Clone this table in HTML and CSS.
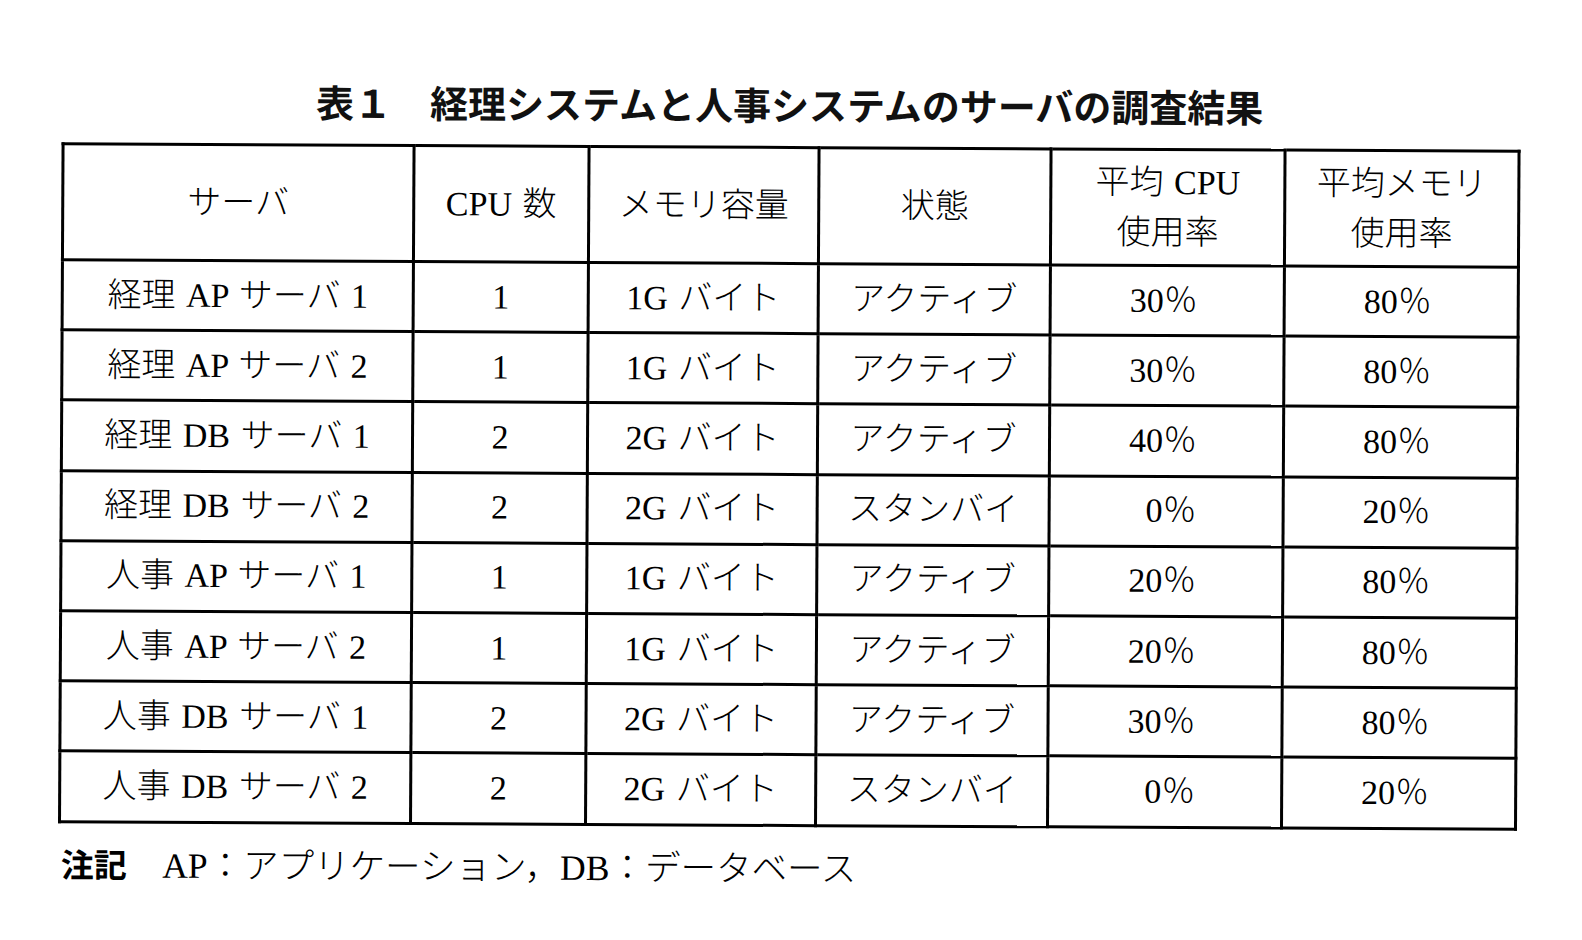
FILE: index.html
```html
<!DOCTYPE html>
<html lang="ja">
<head>
<meta charset="utf-8">
<title>表１　経理システムと人事システムのサーバの調査結果</title>
<link rel="stylesheet" href="styles.css">
</head>
<body>
<div class="sheet">
  <h1 class="title">表１　経理システムと人事システムのサーバの調査結果</h1>
  <table class="servers">
    <colgroup>
      <col class="c-name">
      <col class="c-cpu">
      <col class="c-mem">
      <col class="c-state">
      <col class="c-pct">
      <col class="c-pct2">
    </colgroup>
    <thead>
      <tr class="head">
        <th>サーバ</th>
        <th>CPU 数</th>
        <th>メモリ容量</th>
        <th>状態</th>
        <th>平均 CPU<br>使用率</th>
        <th>平均メモリ<br>使用率</th>
      </tr>
    </thead>
    <tbody>
      <tr><td>経理 AP サーバ 1</td><td>1</td><td>1G バイト</td><td>アクティブ</td><td class="pct">30％</td><td class="pct">80％</td></tr>
      <tr><td>経理 AP サーバ 2</td><td>1</td><td>1G バイト</td><td>アクティブ</td><td class="pct">30％</td><td class="pct">80％</td></tr>
      <tr><td>経理 DB サーバ 1</td><td>2</td><td>2G バイト</td><td>アクティブ</td><td class="pct">40％</td><td class="pct">80％</td></tr>
      <tr><td>経理 DB サーバ 2</td><td>2</td><td>2G バイト</td><td>スタンバイ</td><td class="pct">0％</td><td class="pct">20％</td></tr>
      <tr><td>人事 AP サーバ 1</td><td>1</td><td>1G バイト</td><td>アクティブ</td><td class="pct">20％</td><td class="pct">80％</td></tr>
      <tr><td>人事 AP サーバ 2</td><td>1</td><td>1G バイト</td><td>アクティブ</td><td class="pct">20％</td><td class="pct">80％</td></tr>
      <tr><td>人事 DB サーバ 1</td><td>2</td><td>2G バイト</td><td>アクティブ</td><td class="pct">30％</td><td class="pct">80％</td></tr>
      <tr><td>人事 DB サーバ 2</td><td>2</td><td>2G バイト</td><td>スタンバイ</td><td class="pct">0％</td><td class="pct">20％</td></tr>
    </tbody>
  </table>
  <p class="note"><span class="note-label">注記</span>　AP：アプリケーション，DB：データベース</p>
</div>
</body>
</html>
```
FILE: styles.css
```css
html, body {
  margin: 0;
  padding: 0;
  background: #ffffff;
}

body {
  width: 1582px;
  height: 940px;
  overflow: hidden;
  color: #000;
  font-family: "Liberation Serif", "Noto Sans CJK JP", serif;
}

.sheet {
  width: 1456px;
  margin-left: 60px;
  padding-top: 85px;
  transform: rotate(0.3deg);
  transform-origin: 50% 50%;
}

.title {
  margin: 0 0 23px 0;
  font-family: "Noto Sans CJK JP", sans-serif;
  font-weight: 700;
  font-size: 38px;
  line-height: 38px;
  text-align: center;
  color: #111;
}

.servers {
  width: 1456px;
  table-layout: fixed;
  border-collapse: collapse;
  border: 3px solid #000;
  font-size: 34px;
  font-weight: 300;
}

.c-name { width: 351px; }
.c-cpu { width: 175px; }
.c-mem { width: 230px; }
.c-state { width: 232px; }
.c-pct { width: 234px; }
.c-pct2 { width: 234px; }

.servers th,
.servers td {
  border: 3px solid #000;
  padding: 0;
  text-align: center;
  vertical-align: middle;
  font-weight: 300;
  white-space: nowrap;
  word-spacing: 2px;
}

.servers .head {
  height: 116px;
}

.servers .head th {
  line-height: 50px;
}

.servers tbody tr {
  height: 70.2px;
}

.servers td {
  line-height: 40px;
}

.servers td.pct {
  text-align: right;
  padding-right: 85px;
}

.note {
  margin: 20px 0 0 3px;
  font-size: 35.5px;
  line-height: 40px;
  font-weight: 300;
}

.note-label {
  font-family: "Noto Sans CJK JP", sans-serif;
  font-weight: 700;
  font-size: 33px;
}
```
